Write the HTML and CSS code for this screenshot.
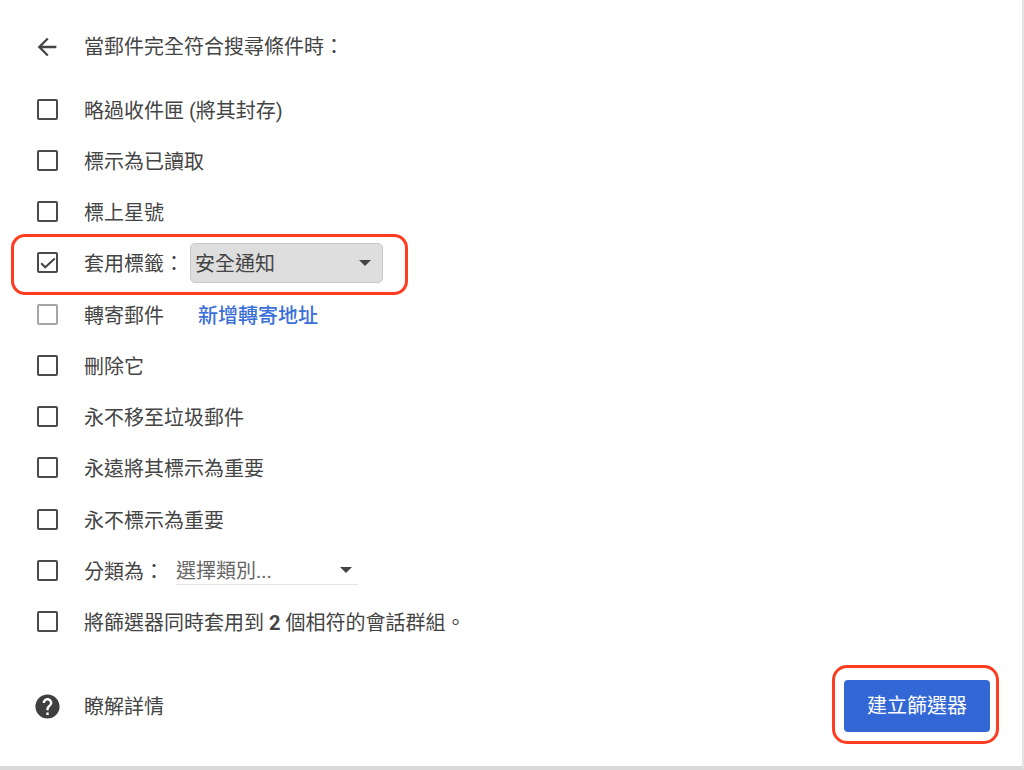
FILE: index.html
```html
<!DOCTYPE html>
<html lang="zh-Hant">
<head>
<meta charset="utf-8">
<title>建立篩選器</title>
<link rel="stylesheet" href="styles.css">
</head>
<body>
<main class="page">
  <header class="head">
    <svg class="icon-back" viewBox="0 0 24 24" width="28" height="28"><path d="M20 11H7.83l5.59-5.59L12 4l-8 8 8 8 1.41-1.41L7.83 13H20v-2z"/></svg>
    <span>當郵件完全符合搜尋條件時：</span>
  </header>
  <ul class="list">
    <li class="row"><span class="box"></span><span>略過收件匣 (將其封存)</span></li>
    <li class="row"><span class="box"></span><span>標示為已讀取</span></li>
    <li class="row"><span class="box"></span><span>標上星號</span></li>
    <li class="row"><span class="box"><svg class="check" viewBox="0 0 16 16" width="16" height="16"><path d="M1.2 8.3l4 4L14.8 3.6"/></svg></span><span class="lab-label">套用標籤：</span><span class="select"><span>安全通知</span><i class="caret"></i></span></li>
    <li class="row"><span class="box box-off"></span><span class="lab-forward">轉寄郵件</span><a class="link" href="#">新增轉寄地址</a></li>
    <li class="row"><span class="box"></span><span>刪除它</span></li>
    <li class="row"><span class="box"></span><span>永不移至垃圾郵件</span></li>
    <li class="row"><span class="box"></span><span>永遠將其標示為重要</span></li>
    <li class="row"><span class="box"></span><span>永不標示為重要</span></li>
    <li class="row"><span class="box"></span><span class="lab-cat">分類為：</span><span class="select-flat"><span>選擇類別...</span><i class="caret"></i></span></li>
    <li class="row"><span class="box"></span><span>將篩選器同時套用到 <b>2</b> 個相符的會話群組。</span></li>
  </ul>
  <footer class="foot">
    <div class="help">
      <svg class="icon-help" viewBox="0 0 24 24" width="29" height="29"><path d="M12 2C6.48 2 2 6.48 2 12s4.48 10 10 10 10-4.48 10-10S17.52 2 12 2zm1 17h-2v-2h2v2zm2.07-7.75l-.9.92C13.45 12.9 13 13.5 13 15h-2v-.5c0-1.1.45-2.1 1.17-2.83l1.24-1.26c.37-.36.59-.86.59-1.41 0-1.1-.9-2-2-2s-2 .9-2 2H8c0-2.21 1.79-4 4-4s4 1.79 4 4c0 .88-.36 1.68-.93 2.25z"/></svg>
      <span class="help-text">瞭解詳情</span>
    </div>
    <button class="create">建立篩選器</button>
  </footer>
  <div class="mark mark-label"></div>
  <div class="mark mark-create"></div>
</main>
</body>
</html>
```
FILE: styles.css
```css
* { box-sizing: border-box; }
html, body { margin: 0; padding: 0; background: #fff; }
body { font-family: Roboto, "Noto Sans CJK TC", sans-serif; font-size: 20px; color: #444; }
.page { position: relative; width: 1024px; height: 770px; overflow: hidden; border-right: 2px solid #e4e4e4; border-bottom: 4px solid #d9d9d9; padding-left: 37px; }
.head { display: flex; align-items: center; height: 28px; margin-top: 33px; line-height: 28px; }
.icon-back { fill: #444; margin-left: -4px; margin-right: 23px; flex: none; }
.list { list-style: none; margin: 22.6px 0 0; padding: 0; }
.row { display: flex; align-items: center; height: 51.25px; white-space: nowrap; }
.box { width: 21px; height: 21px; flex: none; margin-right: 26px; border: 2.4px solid #4a4a4a; border-radius: 2px; display: flex; align-items: center; justify-content: center; }
.box-off { border-color: #a6a6a6; }
.check { fill: none; stroke: #444; stroke-width: 2; flex: none; overflow: visible; }
.lab-label { width: 106px; }
.select { width: 193px; height: 40px; background: #dedede; border: 1px solid #c6c6c6; border-radius: 5px; padding: 0 11px 0 4px; display: flex; align-items: center; justify-content: space-between; }
.caret { width: 0; height: 0; border-left: 6px solid transparent; border-right: 6px solid transparent; border-top: 6px solid #444; }
.lab-forward { width: 114px; }
.link { color: #3a6fd8; text-decoration: none; font-weight: 500; }
.lab-cat { width: 92px; }
.select-flat { width: 182px; height: 30px; border-bottom: 1px solid #e3e3e3; display: flex; align-items: center; justify-content: space-between; padding-right: 6px; color: #666; }
b { font-weight: 700; }
.foot { position: absolute; left: 33px; right: 32px; top: 680px; height: 52px; display: flex; align-items: center; justify-content: space-between; }
.help { display: flex; align-items: center; }
.help-text { padding-bottom: 2px; }
.icon-help { fill: #3f3f3f; margin-right: 22px; flex: none; }
.create { width: 146px; height: 52px; padding: 0 0 3px; background: #3367d6; color: #fff; border: 0; border-radius: 4px; font: inherit; }
.mark { position: absolute; border: 3px solid #ff3b20; }
.mark-label { left: 11px; top: 234px; width: 397px; height: 61px; border-radius: 14px; }
.mark-create { left: 832px; top: 665px; width: 167px; height: 79px; border-radius: 15px; }
```
